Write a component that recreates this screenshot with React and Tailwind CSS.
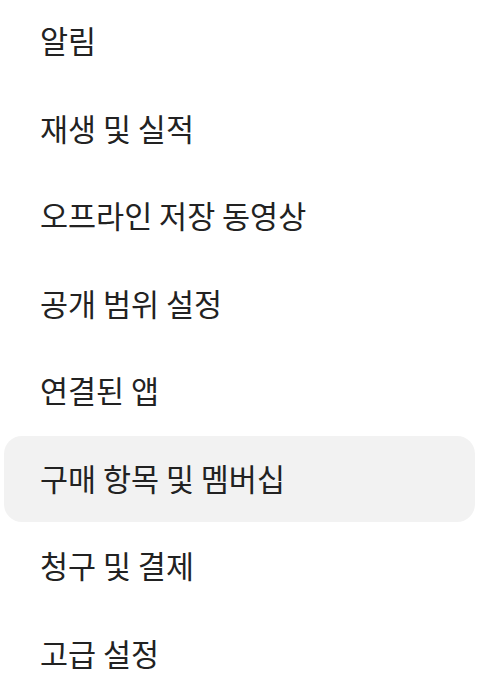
const items = [
  "알림",
  "재생 및 실적",
  "오프라인 저장 동영상",
  "공개 범위 설정",
  "연결된 앱",
  "구매 항목 및 멤버십",
  "청구 및 결제",
  "고급 설정",
];

export default function App() {
  const active = "구매 항목 및 멤버십";
  return (
    <div
      className="min-h-screen w-[486px] bg-white"
      style={{ fontFamily: '"Noto Sans CJK KR", Roboto, sans-serif' }}
    >
      <ul className="flex flex-col -mt-[2px]">
        {items.map((label) => (
          <li key={label} className="h-[87.5px] flex items-center">
            <div
              className={
                "ml-1 w-[471px] h-[86px] flex items-center pl-9 pb-[3px] rounded-[18px] text-[30.5px] leading-none text-[#222222] " +
                (label === active ? "bg-[#f2f2f2]" : "")
              }
            >
              {label}
            </div>
          </li>
        ))}
      </ul>
    </div>
  );
}
